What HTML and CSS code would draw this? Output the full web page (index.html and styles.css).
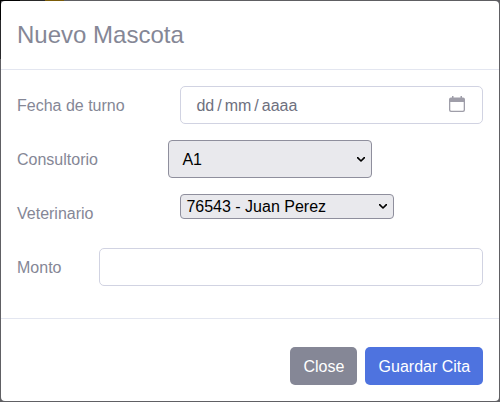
FILE: index.html
```html
<!DOCTYPE html>
<html lang="es">
<head>
<meta charset="utf-8">
<title>Nuevo Mascota</title>
<link rel="stylesheet" href="styles.css">
</head>
<body>
<div class="modal">
  <header class="modal-header"><h5 class="modal-title">Nuevo Mascota</h5></header>
  <div class="modal-body">
    <div class="row">
      <span class="label label-date">Fecha de turno</span>
      <div class="control date">
        <span class="date-parts"><span>dd</span><span>/</span><span>mm</span><span>/</span><span>aaaa</span></span>
        <svg class="calendar" width="16" height="16" viewBox="0 0 16 16"><path d="M3 0h1.500v1.500h7V0H13v1.500h1a2 2 0 0 1 2 2V14a2 2 0 0 1-2 2H2a2 2 0 0 1-2-2V3.500a2 2 0 0 1 2-2h1zM1.300 6v7.700a1 1 0 0 0 1 1h11.400a1 1 0 0 0 1-1V6z" fill="#9f9ea9" fill-rule="evenodd"/></svg>
      </div>
    </div>
    <div class="row">
      <span class="label label-room">Consultorio</span>
      <div class="select room"><span>A1</span><svg class="chevron" width="8" height="5" viewBox="0 0 8 5"><path d="M.6.6 4 4 7.400.6"/></svg></div>
    </div>
    <div class="row">
      <span class="label label-vet">Veterinario</span>
      <div class="select vet"><span>76543 - Juan Perez</span><svg class="chevron" width="8" height="5" viewBox="0 0 8 5"><path d="M.6.6 4 4 7.400.6"/></svg></div>
    </div>
    <div class="row">
      <label class="label label-amount" for="monto">Monto</label>
      <input class="control" id="monto" type="text">
    </div>
  </div>
  <footer class="modal-footer">
    <button class="btn btn-secondary" type="button">Close</button>
    <button class="btn btn-primary" type="button">Guardar Cita</button>
  </footer>
</div>
</body>
</html>
```

FILE: styles.css
```css
* { box-sizing: border-box; }
body {
  margin: 0;
  padding: 1px;
  height: 402px;
  overflow: hidden;
  font: 16px/24px "Liberation Sans", Arial, sans-serif;
  color: #858796;
  background:
    linear-gradient(90deg, #000 0 20px, #292929 20px 45px, #7b5c08 45px 64px, #5e5e62 64px) 0 0 / 500px 1px no-repeat,
    linear-gradient(#000 0 20px, #29292b 20px 59px, #606064 59px) 0 0 / 1px 402px no-repeat,
    #606064;
}
.modal {
  display: flex;
  flex-direction: column;
  height: 400px;
  background: #fff;
  border-radius: 4px;
}
.modal-header {
  height: 69px;
  padding: 16px;
  border-bottom: 1px solid #e3e6f0;
}
.modal-title {
  margin: 0;
  font-size: 24px;
  font-weight: 400;
  line-height: 36px;
}
.modal-body {
  display: flex;
  flex-direction: column;
  gap: 16px;
  height: 248px;
  padding: 16px;
}
.row { display: flex; height: 38px; }
.label { flex: none; padding-top: 8px; }
.label-date, .label-vet { width: 163px; }
.label-room { width: 151px; }
.label-amount { width: 82px; }
.control {
  flex: 1;
  min-width: 0;
  height: 38px;
  border: 1px solid #d1d3e2;
  border-radius: 5px;
  background: #fff;
}
.date {
  display: flex;
  align-items: center;
  justify-content: space-between;
  padding: 2px 17px 0 15.400px;
  color: #6e707e;
}
.date-parts { display: flex; gap: 3px; }
.calendar { margin-bottom: 4px; }
.select {
  display: flex;
  align-items: center;
  justify-content: space-between;
  border: 1px solid #8f8f9d;
  border-radius: 4px;
  background: #e9e9ed;
  color: #000;
}
.room { width: 204px; height: 38px; padding: 0 6px 0 13.400px; }
.room span { padding-top: 2px; }
.vet { width: 214px; height: 25px; padding: 0 6px 0 5.400px; }
.chevron { fill: none; stroke: #000; stroke-width: 1.6; stroke-linecap: round; stroke-linejoin: round; }
.modal-footer {
  display: flex;
  justify-content: flex-end;
  gap: 8px;
  flex: 1;
  padding: 28px 16px 16px;
  border-top: 1px solid #e3e6f0;
}
.btn {
  height: 38px;
  padding: 2px 0 0 .8px;
  border: 0;
  border-radius: 5px;
  color: #fff;
  font: inherit;
}
.btn-secondary { width: 67px; background: #858796; }
.btn-primary { width: 118px; background: #4e73df; }
```
